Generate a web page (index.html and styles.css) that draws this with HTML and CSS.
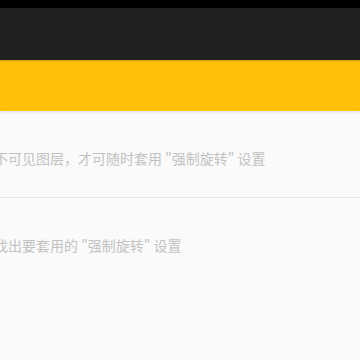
FILE: index.html
```html
<!DOCTYPE html>
<html lang="zh">
<head>
<meta charset="utf-8">
<link rel="stylesheet" href="styles.css">
</head>
<body>
<div class="statusbar"></div>
<div class="toolbar"></div>
<div class="banner"></div>
<div class="list">
  <div class="item"><p class="hint">不可见图层，才可随时套用 "强制旋转" 设置</p></div>
  <div class="item"><p class="hint">找出要套用的 "强制旋转" 设置</p></div>
</div>
</body>
</html>
```
FILE: styles.css
```css
html, body {
  margin: 0;
  padding: 0;
  width: 360px;
  height: 360px;
  overflow: hidden;
  background: #fafafa;
  font-family: "Noto Sans CJK SC", "Noto Sans", sans-serif;
}
.statusbar {
  height: 8px;
  background: #000;
}
.toolbar {
  height: 52px;
  background: #212121;
}
.banner {
  height: 51px;
  background: #ffc107;
  box-shadow: inset 0 2px 2px -1px rgba(0,0,0,0.18), 0 1px 3px rgba(0,0,0,0.12);
  position: relative;
}
.list {
  display: flex;
  flex-direction: column;
}
.item {
  padding: 37px 0 29px;
  border-bottom: 1px solid #e4e4e4;
}
.item:last-child {
  border-bottom: none;
}
.hint {
  margin: 0 0 0 -6px;
  font-size: 14px;
  line-height: 20px;
  color: #c2c2c2;
  white-space: nowrap;
}
```
